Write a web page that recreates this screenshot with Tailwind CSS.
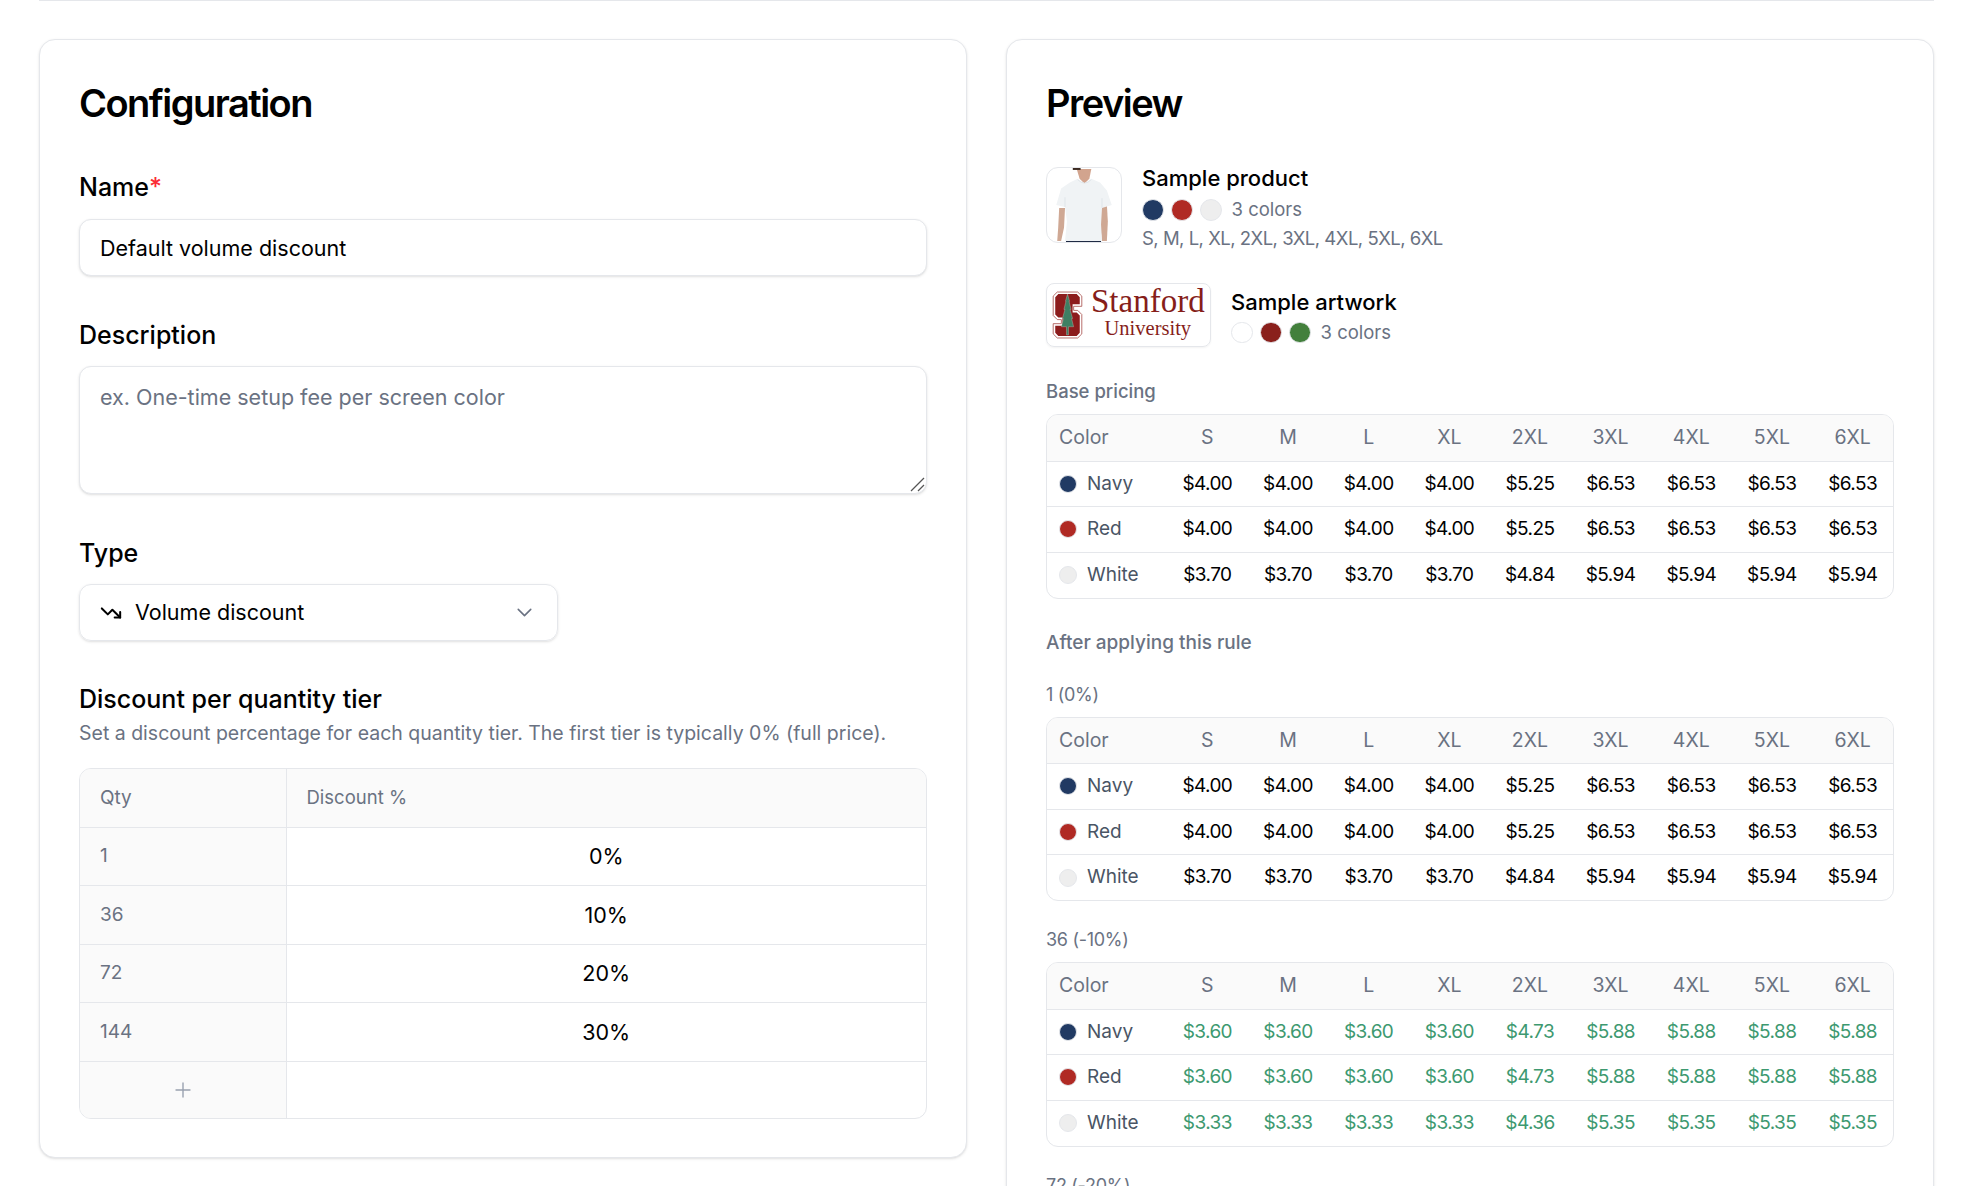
<!DOCTYPE html>
<html lang="en">
<head>
    <meta charset="UTF-8">
    <title>Volume discount rule</title>
    <script src="https://cdn.jsdelivr.net/npm/@tailwindcss/browser@4"></script>
</head>
<body class="bg-white text-black font-['Inter',sans-serif] overflow-hidden h-screen">
    <div class="ml-[39px] w-[1895px] border-t border-gray-200 pt-[38px]">
        <div class="grid grid-cols-2 gap-[39px] items-start">

            <!-- Configuration -->
            <section class="bg-white border border-gray-200 rounded-2xl shadow-sm px-[39px] pt-[39px] pb-[38px]">
                <h1 class="text-[38px] leading-[48px] font-semibold tracking-[-0.04em] mb-[46px]">Configuration</h1>

                <label class="block text-[25px] leading-7 mb-[18px] font-[450]">Name<span class="text-red-500">*</span></label>
                <input type="text" value="Default volume discount" class="block w-full h-[57px] px-5 text-[21.5px] bg-white border border-gray-200 rounded-xl shadow-sm mb-[45px] outline-none">

                <label class="block text-[25px] leading-7 mb-[17px] font-[450]">Description</label>
                <div class="relative mb-[45px]">
                    <textarea placeholder="ex. One-time setup fee per screen color" class="block w-full h-[128px] px-5 py-4 text-[21.5px] leading-7 bg-white border border-gray-200 rounded-xl shadow-sm placeholder:text-gray-500 resize-none outline-none"></textarea>
                    <svg class="absolute right-[2px] bottom-[2px] w-[15px] h-[15px]" viewBox="0 0 15 15" fill="none" stroke="#555" stroke-width="1.2"><path d="M1 14 14 1"/><path d="M8 14 14 8"/></svg>
                </div>

                <label class="block text-[25px] leading-7 mb-[17px] font-[450]">Type</label>
                <div class="flex items-center justify-between w-[479px] h-[57px] px-5 text-[21.5px] border border-gray-200 rounded-xl shadow-sm mb-[44px]">
                    <div class="flex items-center gap-[13px]">
                        <svg class="w-[22px] h-[22px]" viewBox="0 0 24 24" fill="none" stroke="currentColor" stroke-width="2.2" stroke-linecap="round" stroke-linejoin="round"><polyline points="22 17 13.5 8.5 8.5 13.5 2 7"/><polyline points="16 17 22 17 22 11"/></svg>
                        <span>Volume discount</span>
                    </div>
                    <svg class="w-[25px] h-[25px] text-gray-500" viewBox="0 0 24 24" fill="none" stroke="currentColor" stroke-width="1.5" stroke-linecap="round" stroke-linejoin="round"><path d="m6 9 6 6 6-6"/></svg>
                </div>

                <h2 class="text-[25px] leading-7 font-[450]">Discount per quantity tier</h2>
                <p class="text-[19.5px] leading-[25px] text-gray-500 mt-[8px] mb-[22px]">Set a discount percentage for each quantity tier. The first tier is typically 0% (full price).</p>

                <div class="border border-gray-200 rounded-xl overflow-hidden">
                    <table class="w-full table-fixed">
                        <thead>
                            <tr class="h-[58px] bg-neutral-50 text-left text-gray-500 font-normal">
                                <th class="w-[206px] px-5 text-[19px] font-normal border-r border-gray-200">Qty</th>
                                <th class="px-5 text-[18.5px] font-normal">Discount %</th>
                            </tr>
                        </thead>
                        <tbody class="text-[21.5px]">
                            <tr class="h-[58.5px] border-t border-gray-200">
                                <td class="px-5 text-[19px] text-gray-500 bg-neutral-50 border-r border-gray-200">1</td>
                                <td class="text-center">0%</td>
                            </tr>
                            <tr class="h-[58.5px] border-t border-gray-200">
                                <td class="px-5 text-[19px] text-gray-500 bg-neutral-50 border-r border-gray-200">36</td>
                                <td class="text-center">10%</td>
                            </tr>
                            <tr class="h-[58.5px] border-t border-gray-200">
                                <td class="px-5 text-[19px] text-gray-500 bg-neutral-50 border-r border-gray-200">72</td>
                                <td class="text-center">20%</td>
                            </tr>
                            <tr class="h-[58.5px] border-t border-gray-200">
                                <td class="px-5 text-[19px] text-gray-500 bg-neutral-50 border-r border-gray-200">144</td>
                                <td class="text-center">30%</td>
                            </tr>
                            <tr class="h-[57px] border-t border-gray-200">
                                <td class="bg-neutral-50 border-r border-gray-200">
                                    <svg class="w-6 h-6 mx-auto text-gray-400" viewBox="0 0 24 24" fill="none" stroke="currentColor" stroke-width="1.4" stroke-linecap="round"><path d="M5 12h14"/><path d="M12 5v14"/></svg>
                                </td>
                                <td></td>
                            </tr>
                        </tbody>
                    </table>
                </div>
            </section>

            <!-- Preview -->
            <section class="bg-white border border-gray-200 rounded-2xl shadow-sm px-[39px] pt-[39px] pb-[38px]">
                <h1 class="text-[38px] leading-[48px] font-semibold tracking-[-0.04em] mb-[40px]">Preview</h1>

                <div class="flex items-start gap-5 mb-[32px]">
                    <div class="w-[76px] h-[76px] shrink-0 border border-gray-200 rounded-xl overflow-hidden">
                        <svg class="w-full h-full" viewBox="1.5 2 76 76">
                            <polygon points="14,43 20,43 19,63 16,77 12,77 13,63" fill="#cfa894"/>
                            <polygon points="57,42 63,40 64,57 63,77 58,77 56,60" fill="#cfa894"/>
                            <polygon points="32,3 47,3 45,13 40,18 35,13" fill="#d2a48e"/>
                            <rect x="28" y="2" width="8" height="2" fill="#3b2a22"/>
                            <rect x="21" y="76" width="36" height="2" fill="#1f2a44"/>
                            <polygon points="33,13 40,18 47,13 56,17 63,25 68,40 58,43 57,60 58,77 20,77 22,57 20,42 11,40 16,23 25,17" fill="#f0f3f5"/>
                            <path d="M33 14Q40 21 47 14" fill="none" stroke="#dfe4e8"/>
                            <path d="M20 42 20 32M58 43 58 33" fill="none" stroke="#dfe4e8"/>
                        </svg>
                    </div>
                    <div class="-mt-[3px]">
                        <div class="text-[22px] leading-7 font-[450]">Sample product</div>
                        <div class="flex items-center gap-[7.5px] mt-[7px] h-[22px]">
                            <span class="w-[21.5px] h-[21.5px] rounded-full bg-[#213a63] border border-gray-200"></span>
                            <span class="w-[21.5px] h-[21.5px] rounded-full bg-[#b02a24] border border-gray-200"></span>
                            <span class="w-[21.5px] h-[21.5px] rounded-full bg-[#eeeeee] border border-gray-200"></span>
                            <span class="ml-[2.5px] text-[18.5px] text-gray-500">3 colors</span>
                        </div>
                        <div class="text-[18.5px] leading-[25px] tracking-[-0.5px] text-gray-500 mt-[5px]">S, M, L, XL, 2XL, 3XL, 4XL, 5XL, 6XL</div>
                    </div>
                </div>

                <div class="flex items-start gap-5 mb-[32px]">
                    <div class="flex w-[165px] h-[64px] shrink-0 items-center gap-[8px] pl-[5px] border border-gray-200 rounded-lg shadow-xs">
                        <svg class="w-[31px] h-[48px] shrink-0" viewBox="0 0 30 47">
                            <path d="M5 1H25L29 5V15H21V19H25L29 23V42L25 46H5L1 42V32H9V28H5L1 24V5Z" fill="#fff" stroke="#a8504c" stroke-width=".8"/>
                            <path d="M6 3H24L27 6V13H20V21H24L27 24V41L24 44H6L3 41V34H10V26H6L3 23V6Z" fill="#8c1c1c"/>
                            <polygon points="15,3 17,10 16.500,10 18.500,18 17.500,18 20,27 19,27 21,35 16,35 16,43 14,43 14,35 9,35 11,27 10,27 12.500,18 11.500,18 13.500,10 13,10" fill="#3f7f63" stroke="#e8d8d4" stroke-width=".3"/>
                        </svg>
                        <div class="flex flex-col items-center -mt-[6px] font-['Liberation_Serif',serif] text-[#861e1a]">
                            <span class="text-[33px] leading-[32px]">Stanford</span>
                            <span class="text-[20.500px] leading-[22px]">University</span>
                        </div>
                    </div>
                    <div class="mt-[4.500px]">
                        <div class="text-[22px] leading-7 font-[450]">Sample artwork</div>
                        <div class="flex items-center gap-[7.5px] mt-[6px] h-[22px]">
                            <span class="w-[21.5px] h-[21.5px] rounded-full bg-white border border-gray-200"></span>
                            <span class="w-[21.5px] h-[21.5px] rounded-full bg-[#8a201c] border border-gray-200"></span>
                            <span class="w-[21.5px] h-[21.5px] rounded-full bg-[#43803c] border border-gray-200"></span>
                            <span class="ml-[2.5px] text-[18.5px] text-gray-500">3 colors</span>
                        </div>
                    </div>
                </div>

                <div class="text-[18.5px] leading-[25px] text-gray-500 font-[450] mb-[10px]">Base pricing</div>
                <div class="border border-gray-200 rounded-xl overflow-hidden mb-[31px]">
                    <table class="w-full table-fixed text-[19px] text-center tracking-[-0.6px] [&_td]:h-[45.5px] [&_th]:h-[46px] [&_th]:text-[19.5px] [&_th]:font-normal [&_th]:tracking-normal [&_th]:text-gray-500 [&_th]:bg-neutral-50 [&_tr]:border-b [&_tr]:border-gray-200 [&_tbody_tr:last-child]:border-b-0">
                        <thead><tr><th class="w-[120px] pl-[12px] !text-left">Color</th><th>S</th><th>M</th><th>L</th><th>XL</th><th>2XL</th><th>3XL</th><th>4XL</th><th>5XL</th><th>6XL</th></tr></thead>
                        <tbody>
                            <tr><td class="pl-[12px]"><div class="flex items-center gap-[10px] text-gray-600 tracking-normal"><span class="w-[18px] h-[18px] rounded-full bg-[#213a63] border border-gray-200"></span>Navy</div></td><td>$4.00</td><td>$4.00</td><td>$4.00</td><td>$4.00</td><td>$5.25</td><td>$6.53</td><td>$6.53</td><td>$6.53</td><td>$6.53</td></tr>
                            <tr><td class="pl-[12px]"><div class="flex items-center gap-[10px] text-gray-600 tracking-normal"><span class="w-[18px] h-[18px] rounded-full bg-[#b02a24] border border-gray-200"></span>Red</div></td><td>$4.00</td><td>$4.00</td><td>$4.00</td><td>$4.00</td><td>$5.25</td><td>$6.53</td><td>$6.53</td><td>$6.53</td><td>$6.53</td></tr>
                            <tr><td class="pl-[12px]"><div class="flex items-center gap-[10px] text-gray-600 tracking-normal"><span class="w-[18px] h-[18px] rounded-full bg-[#eeeeee] border border-gray-200"></span>White</div></td><td>$3.70</td><td>$3.70</td><td>$3.70</td><td>$3.70</td><td>$4.84</td><td>$5.94</td><td>$5.94</td><td>$5.94</td><td>$5.94</td></tr>
                        </tbody>
                    </table>
                </div>

                <div class="text-[19px] leading-[25px] text-gray-500 font-[450] mb-[27px]">After applying this rule</div>

                <div class="text-[18px] leading-[25px] tracking-[-0.3px] text-gray-500 mb-[10px]">1 (0%)</div>
                <div class="border border-gray-200 rounded-xl overflow-hidden mb-[26px]">
                    <table class="w-full table-fixed text-[19px] text-center tracking-[-0.6px] [&_td]:h-[45.5px] [&_th]:h-[46px] [&_th]:text-[19.5px] [&_th]:font-normal [&_th]:tracking-normal [&_th]:text-gray-500 [&_th]:bg-neutral-50 [&_tr]:border-b [&_tr]:border-gray-200 [&_tbody_tr:last-child]:border-b-0">
                        <thead><tr><th class="w-[120px] pl-[12px] !text-left">Color</th><th>S</th><th>M</th><th>L</th><th>XL</th><th>2XL</th><th>3XL</th><th>4XL</th><th>5XL</th><th>6XL</th></tr></thead>
                        <tbody>
                            <tr><td class="pl-[12px]"><div class="flex items-center gap-[10px] text-gray-600 tracking-normal"><span class="w-[18px] h-[18px] rounded-full bg-[#213a63] border border-gray-200"></span>Navy</div></td><td>$4.00</td><td>$4.00</td><td>$4.00</td><td>$4.00</td><td>$5.25</td><td>$6.53</td><td>$6.53</td><td>$6.53</td><td>$6.53</td></tr>
                            <tr><td class="pl-[12px]"><div class="flex items-center gap-[10px] text-gray-600 tracking-normal"><span class="w-[18px] h-[18px] rounded-full bg-[#b02a24] border border-gray-200"></span>Red</div></td><td>$4.00</td><td>$4.00</td><td>$4.00</td><td>$4.00</td><td>$5.25</td><td>$6.53</td><td>$6.53</td><td>$6.53</td><td>$6.53</td></tr>
                            <tr><td class="pl-[12px]"><div class="flex items-center gap-[10px] text-gray-600 tracking-normal"><span class="w-[18px] h-[18px] rounded-full bg-[#eeeeee] border border-gray-200"></span>White</div></td><td>$3.70</td><td>$3.70</td><td>$3.70</td><td>$3.70</td><td>$4.84</td><td>$5.94</td><td>$5.94</td><td>$5.94</td><td>$5.94</td></tr>
                        </tbody>
                    </table>
                </div>

                <div class="text-[18px] leading-[25px] tracking-[-0.3px] text-gray-500 mb-[10px]">36 (-10%)</div>
                <div class="border border-gray-200 rounded-xl overflow-hidden mb-[26px]">
                    <table class="w-full table-fixed text-[19px] text-center tracking-[-0.6px] text-[#3d9970] [&_td]:h-[45.5px] [&_th]:h-[46px] [&_th]:text-[19.5px] [&_th]:font-normal [&_th]:tracking-normal [&_th]:text-gray-500 [&_th]:bg-neutral-50 [&_tr]:border-b [&_tr]:border-gray-200 [&_tbody_tr:last-child]:border-b-0">
                        <thead><tr><th class="w-[120px] pl-[12px] !text-left">Color</th><th>S</th><th>M</th><th>L</th><th>XL</th><th>2XL</th><th>3XL</th><th>4XL</th><th>5XL</th><th>6XL</th></tr></thead>
                        <tbody>
                            <tr><td class="pl-[12px]"><div class="flex items-center gap-[10px] text-gray-600 tracking-normal"><span class="w-[18px] h-[18px] rounded-full bg-[#213a63] border border-gray-200"></span>Navy</div></td><td>$3.60</td><td>$3.60</td><td>$3.60</td><td>$3.60</td><td>$4.73</td><td>$5.88</td><td>$5.88</td><td>$5.88</td><td>$5.88</td></tr>
                            <tr><td class="pl-[12px]"><div class="flex items-center gap-[10px] text-gray-600 tracking-normal"><span class="w-[18px] h-[18px] rounded-full bg-[#b02a24] border border-gray-200"></span>Red</div></td><td>$3.60</td><td>$3.60</td><td>$3.60</td><td>$3.60</td><td>$4.73</td><td>$5.88</td><td>$5.88</td><td>$5.88</td><td>$5.88</td></tr>
                            <tr><td class="pl-[12px]"><div class="flex items-center gap-[10px] text-gray-600 tracking-normal"><span class="w-[18px] h-[18px] rounded-full bg-[#eeeeee] border border-gray-200"></span>White</div></td><td>$3.33</td><td>$3.33</td><td>$3.33</td><td>$3.33</td><td>$4.36</td><td>$5.35</td><td>$5.35</td><td>$5.35</td><td>$5.35</td></tr>
                        </tbody>
                    </table>
                </div>

                <div class="text-[18px] leading-[25px] tracking-[-0.3px] text-gray-500 mb-[10px]">72 (-20%)</div>
            </section>
        </div>
    </div>
</body>
</html>
